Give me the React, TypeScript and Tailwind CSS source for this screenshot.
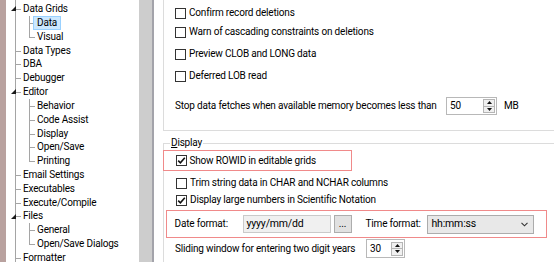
import React from "react";

type Row = { t: string; lvl: 0 | 1; last?: boolean; parent?: boolean; sel?: boolean };

const rows: Row[] = [
  { t: "Types", lvl: 1, last: true },
  { t: "Data Grids", lvl: 0, parent: true },
  { t: "Data", lvl: 1, sel: true },
  { t: "Visual", lvl: 1, last: true },
  { t: "Data Types", lvl: 0 },
  { t: "DBA", lvl: 0 },
  { t: "Debugger", lvl: 0 },
  { t: "Editor", lvl: 0, parent: true },
  { t: "Behavior", lvl: 1 },
  { t: "Code Assist", lvl: 1 },
  { t: "Display", lvl: 1 },
  { t: "Open/Save", lvl: 1 },
  { t: "Printing", lvl: 1, last: true },
  { t: "Email Settings", lvl: 0 },
  { t: "Executables", lvl: 0 },
  { t: "Execute/Compile", lvl: 0 },
  { t: "Files", lvl: 0, parent: true },
  { t: "General", lvl: 1 },
  { t: "Open/Save Dialogs", lvl: 1, last: true },
  { t: "Formatter", lvl: 0 },
];

function Cell({ kind, tri }: { kind: "pipe" | "tee" | "elbow"; tri?: boolean }) {
  return (
    <div className="relative h-full w-[14px] shrink-0">
      <div
        className={
          kind === "elbow"
            ? "absolute left-[7px] top-0 h-1/2 w-px bg-[#a5a5a5]"
            : "absolute left-[7px] top-0 h-full w-px bg-[#a5a5a5]"
        }
      />
      {kind !== "pipe" && <div className="absolute left-[7px] top-1/2 h-px w-[6px] bg-[#a5a5a5]" />}
      {tri && (
        <svg className="absolute left-[3px] top-[4px]" width="5" height="5" viewBox="0 0 5 5">
          <path d="M5 0 L5 5 L0 5 Z" fill="#1a1a1a" />
        </svg>
      )}
    </div>
  );
}

function Tree() {
  return (
    <div className="w-[133px] shrink-0 overflow-hidden bg-white">
      <div className="mt-[-11.7px]">
        {rows.map((r, i) => (
          <div key={i} className="flex h-[13.83px] items-center pl-[2px]">
            {r.lvl === 0 ? (
              <Cell kind="tee" tri={r.parent} />
            ) : (
              <>
                <Cell kind="pipe" />
                <Cell kind={r.last ? "elbow" : "tee"} />
              </>
            )}
            {r.sel ? (
              <span className="relative z-10 ml-[-3px] flex h-[14px] items-center border border-[#99d1ff] bg-[#cce8ff] px-[3px] whitespace-nowrap">
                {r.t}
              </span>
            ) : (
              <span className="ml-[1px] whitespace-nowrap">{r.t}</span>
            )}
          </div>
        ))}
      </div>
    </div>
  );
}

function Check({ checked }: { checked?: boolean }) {
  return (
    <div className="flex h-[11px] w-[11px] shrink-0 items-center justify-center border border-[#333333] bg-white">
      {checked && (
        <svg width="9" height="9" viewBox="0 0 9 9">
          <path d="M1.2 4.6 L3.4 6.8 L7.8 1.8" fill="none" stroke="#111" strokeWidth="1.6" />
        </svg>
      )}
    </div>
  );
}

function CheckRow({ label, checked }: { label: string; checked?: boolean }) {
  return (
    <div className="flex h-[14px] items-center">
      <Check checked={checked} />
      <span className="ml-[3px] whitespace-nowrap">{label}</span>
    </div>
  );
}

function SpinBtns() {
  return (
    <div className="mr-[1px] flex h-[14px] w-[12px] shrink-0 flex-col border border-[#b5b5b5] bg-[#f0f0f0]">
      <div className="flex flex-1 items-center justify-center border-b border-[#b5b5b5]">
        <svg width="5" height="3" viewBox="0 0 5 3">
          <path d="M0 3 L2.5 0 L5 3 Z" fill="#111" />
        </svg>
      </div>
      <div className="flex flex-1 items-center justify-center">
        <svg width="5" height="3" viewBox="0 0 5 3">
          <path d="M0 0 L5 0 L2.5 3 Z" fill="#111" />
        </svg>
      </div>
    </div>
  );
}

export default function App() {
  return (
    <div
      className="flex h-[262px] w-[554px] overflow-hidden bg-white text-[10px] leading-none tracking-[-0.18px] text-black"
      style={{ fontFamily: "Roboto, 'Liberation Sans', sans-serif" }}
    >
      <div className="w-[6px] shrink-0 bg-[#b9a29f]" />
      <Tree />
      <div className="w-[13px] shrink-0 bg-[#cdcdcd]" />
      <div className="w-[2px] shrink-0 bg-[#a3a3aa]" />
      <div className="flex min-w-0 flex-1 flex-col overflow-hidden pl-[9px]">
        {/* Upper group */}
        <div className="h-[131px] shrink-0 border-b border-l border-[#dcdcdc] pl-[11px]">
          <div className="mt-[6px]">
            <CheckRow label="Confirm record deletions" />
          </div>
          <div className="mt-[5px]">
            <CheckRow label="Warn of cascading constraints on deletions" />
          </div>
          <div className="mt-[8px]">
            <CheckRow label="Preview CLOB and LONG data" />
          </div>
          <div className="mt-[8px]">
            <CheckRow label="Deferred LOB read" />
          </div>
          <div className="mt-[14px] flex h-[18px] items-center">
            <span className="w-[271px] shrink-0 whitespace-nowrap">
              Stop data fetches when available memory becomes less than
            </span>
            <div className="flex h-[18px] w-[51px] shrink-0 items-center border border-[#b8b8b8] bg-white">
              <span className="flex-1 pl-[3px]">50</span>
              <SpinBtns />
            </div>
            <span className="ml-[7px]">MB</span>
          </div>
        </div>

        {/* Display group */}
        <div className="relative mt-[12px] flex-1 border-l border-t border-[#dcdcdc]">
          <span className="absolute left-[6px] top-[-6px] bg-white px-[1px]">
            <span className="underline">D</span>isplay
          </span>
          <div className="ml-[-1px] mt-[6px] flex h-[21px] w-[189px] items-center border-[1.5px] border-[#f08a8a] pl-[11.5px]">
            <Check checked />
            <span className="ml-[3px] whitespace-nowrap">Show ROWID in editable grids</span>
          </div>
          <div className="mt-[5px] pl-[12px]">
            <CheckRow label="Trim string data in CHAR and NCHAR columns" />
          </div>
          <div className="mt-[3px] pl-[12px]">
            <CheckRow label="Display large numbers in Scientific Notation" checked />
          </div>
          <div className="ml-[2px] mt-[3px] flex h-[28px] w-[381px] items-center border-[1.5px] border-[#f08a8a] pl-[7.5px]">
            <span className="w-[68px] shrink-0 whitespace-nowrap">Date format:</span>
            <div className="flex h-[18px] w-[88px] shrink-0 items-center border border-[#cacaca] bg-[#f0f0f0] pl-[3px] text-[10.5px]">
              yyyy/mm/dd
            </div>
            <div className="ml-[3px] flex h-[18px] w-[18px] shrink-0 items-center justify-center border border-[#adadad] bg-[#e1e1e1]">
              ...
            </div>
            <span className="ml-[14px] w-[61px] shrink-0 whitespace-nowrap">Time format:</span>
            <div className="flex h-[19px] w-[107px] shrink-0 items-center justify-between border border-[#acacac] bg-[#e8e8e8] pl-[4px] pr-[5px] text-[10.5px]">
              <span>hh:mm:ss</span>
              <svg width="7" height="5" viewBox="0 0 7 5">
                <path d="M0.5 0.8 L3.5 3.8 L6.5 0.8" fill="none" stroke="#333" strokeWidth="1.1" />
              </svg>
            </div>
          </div>
          <div className="mt-[1px] flex h-[19px] items-center pl-[11px]">
            <span className="w-[191px] shrink-0 whitespace-nowrap">Sliding window for entering two digit years</span>
            <div className="flex h-[19px] w-[39px] shrink-0 items-center border border-[#b8b8b8] bg-white">
              <span className="flex-1 pl-[3px]">30</span>
              <SpinBtns />
            </div>
          </div>
        </div>
      </div>
    </div>
  );
}
